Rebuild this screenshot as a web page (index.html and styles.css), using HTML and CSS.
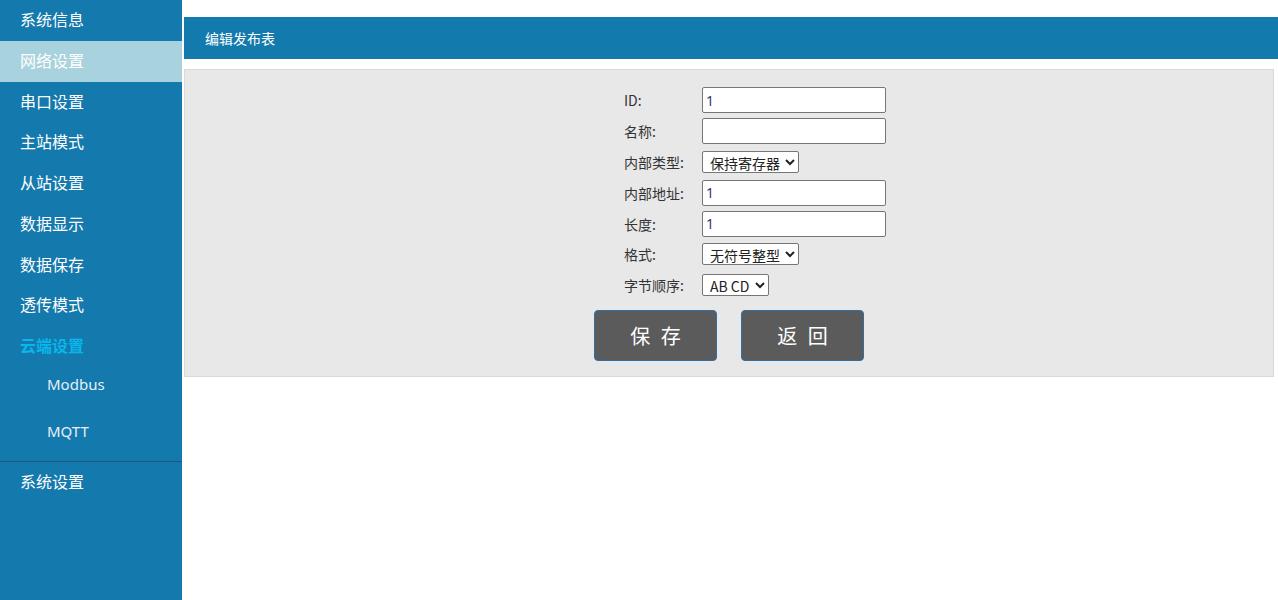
FILE: index.html
```html
<!DOCTYPE html>
<html lang="zh-CN">
<head>
<meta charset="utf-8">
<title>编辑发布表</title>
<link rel="stylesheet" href="styles.css">
</head>
<body>
<div class="layout">
  <nav class="sidebar">
    <div class="nav-item">系统信息</div>
    <div class="nav-item active">网络设置</div>
    <div class="nav-item">串口设置</div>
    <div class="nav-item">主站模式</div>
    <div class="nav-item">从站设置</div>
    <div class="nav-item">数据显示</div>
    <div class="nav-item">数据保存</div>
    <div class="nav-item">透传模式</div>
    <div class="nav-item current">云端设置</div>
    <div class="sub-item">Modbus</div>
    <div class="sub-item">MQTT</div>
    <div class="nav-item sep">系统设置</div>
  </nav>
  <main class="main">
    <div class="title-bar">编辑发布表</div>
    <section class="panel">
      <div class="form">
        <label class="lbl">ID:</label>
        <div class="field"><input class="txt" type="text" value="1"></div>
        <label class="lbl">名称:</label>
        <div class="field"><input class="txt" type="text" value=""></div>
        <label class="lbl">内部类型:</label>
        <div class="field"><select class="sel"><option>保持寄存器</option></select></div>
        <label class="lbl">内部地址:</label>
        <div class="field"><input class="txt" type="text" value="1"></div>
        <label class="lbl">长度:</label>
        <div class="field"><input class="txt" type="text" value="1"></div>
        <label class="lbl">格式:</label>
        <div class="field"><select class="sel"><option>无符号整型</option></select></div>
        <label class="lbl">字节顺序:</label>
        <div class="field"><select class="sel"><option>AB CD</option></select></div>
      </div>
      <div class="buttons">
        <button class="btn" type="button">保 存</button>
        <button class="btn" type="button">返 回</button>
      </div>
    </section>
  </main>
</div>
</body>
</html>
```
FILE: styles.css
```css
html, body {
  margin: 0;
  padding: 0;
  height: 100%;
  background: #ffffff;
  font-family: "Noto Sans", "Noto Sans CJK SC", sans-serif;
}
.layout {
  display: flex;
  height: 600px;
}
.sidebar {
  width: 182px;
  flex: none;
  background: #1479ad;
  display: flex;
  flex-direction: column;
}
.nav-item {
  height: 40.75px;
  line-height: 38px;
  padding-left: 20px;
  font-size: 16px;
  color: #ffffff;
  font-family: "Noto Sans CJK SC", sans-serif;
}
.nav-item.active {
  background: #a8d3de;
}
.nav-item.current {
  color: #08b6ea;
  font-weight: bold;
}
.sub-item {
  height: 47px;
  line-height: 34px;
  padding-left: 47px;
  font-size: 15px;
  color: #e4f0f6;
  font-family: "Noto Sans", sans-serif;
}
.nav-item.sep {
  border-top: 1px solid #1f5878;
  height: 40px;
  line-height: 39px;
}
.main {
  flex: 1;
  margin-left: 2px;
  padding-top: 17px;
}
.title-bar {
  height: 42px;
  line-height: 42px;
  background: #137aad;
  color: #ffffff;
  font-size: 14px;
  padding-left: 21px;
  font-family: "Noto Sans CJK SC", sans-serif;
}
.panel {
  margin-top: 10px;
  margin-right: 4px;
  background: #e8e8e8;
  border: 1px solid #d9d9d9;
  padding: 15px 0 15px 0;
  display: flex;
  flex-direction: column;
  align-items: center;
}
.form {
  display: grid;
  grid-template-columns: 78px 184px;
  grid-auto-rows: 30.8px;
  align-items: center;
  margin-left: 52px;
}
.lbl {
  font-size: 14px;
  color: #333333;
  font-family: "Noto Sans CJK SC", sans-serif;
}
.field {
  display: flex;
  align-items: center;
}
.txt {
  box-sizing: border-box;
  width: 184px;
  height: 26px;
  margin: 0;
  border: 1px solid #767676;
  border-radius: 2px;
  background: #ffffff;
  padding: 0 3px;
  font-size: 14px;
  color: #3a2f78;
  font-family: "Noto Sans", "Noto Sans CJK SC", sans-serif;
}
.sel {
  height: 22px;
  margin: 0;
  padding: 0 2px 0 3px;
  font-size: 14px;
  color: #222222;
  border: 1px solid #767676;
  border-radius: 2px;
  background: #ffffff;
  font-family: "Noto Sans CJK SC", "Noto Sans", sans-serif;
}
.buttons {
  display: flex;
  gap: 24px;
  margin-top: 9px;
}
.btn {
  width: 123px;
  height: 51px;
  background: #5b5b5b;
  border: 1px solid #2f6fa6;
  border-radius: 4px;
  color: #ffffff;
  font-size: 20px;
  letter-spacing: 3px;
  padding: 0 0 0 3px;
  font-family: "Noto Sans CJK SC", sans-serif;
}
```
